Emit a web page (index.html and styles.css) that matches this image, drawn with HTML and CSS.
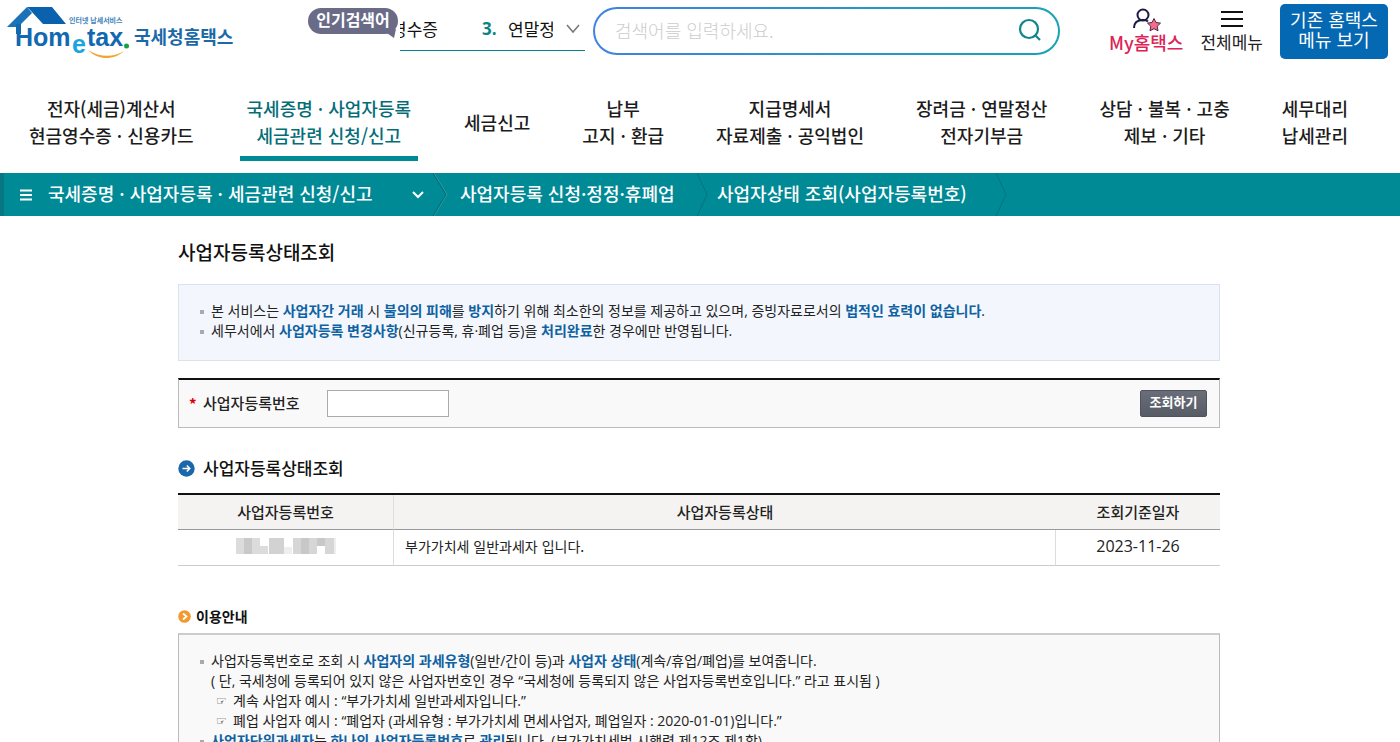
FILE: index.html
```html
<!DOCTYPE html>
<html lang="ko">
<head>
<meta charset="utf-8">
<title>국세청 홈택스 - 사업자등록상태조회</title>
<link rel="stylesheet" href="styles.css">
</head>
<body>
<div class="page">
  <header class="header">
    <a class="logo" href="#" aria-label="국세청홈택스">
      <svg width="236" height="60" viewBox="0 0 236 60">
        <path d="M7 27 27 7l5 6L18 27v4h-1v-4z" fill="#1a72b8"/>
        <path d="M16 24h5v10h-5z" fill="#1268b1"/>
        <path d="M27 7h25l14 17H43L31 11z" fill="#0a62ae"/>
        <text class="logo-small" x="69" y="23">인터넷 납세서비스</text>
        <text class="logo-main" x="15" y="46">Hom</text>
        <text class="logo-e" x="72" y="53">e</text>
        <text class="logo-main" x="87" y="46">tax</text>
        <circle cx="126.500" cy="46" r="2.500" fill="#18a04a"/>
        <path d="M88 50c9 10 26 11 36 1-9 6-24 7-36-1z" fill="#f2a530"/>
        <text class="logo-ko" x="134" y="44">국세청홈택스</text>
      </svg>
    </a>
    <div class="hot">
      <span class="hot-tag">인기검색어
        <svg class="hot-tail" width="14" height="10" viewBox="0 0 14 10"><path d="M0 2 12 0 10 9z" fill="#6a6b87"/></svg>
      </span>
      <div class="ticker">
        <a class="word word-out" href="#">현금영수증</a>
        <b class="rank">3.</b>
        <a class="word word-in" href="#">연말정산</a>
        <button class="ticker-open" type="button" aria-label="인기검색어 펼치기">
          <svg width="14" height="10" viewBox="0 0 14 10" fill="none" stroke="#777" stroke-width="1.500"><path d="m1 1 6 7 6-7"/></svg>
        </button>
      </div>
    </div>
    <form class="search">
      <input type="text" aria-label="검색어" placeholder="검색어를 입력하세요.">
      <button type="button" aria-label="검색">
        <svg width="24" height="24" viewBox="0 0 24 24" fill="none" stroke="#11858d" stroke-width="2.200"><circle cx="11" cy="11" r="9"/><path d="m17.500 17.500 4.500 4.500"/></svg>
      </button>
    </form>
    <a class="tool tool-my" href="#">
      <svg width="30" height="24" viewBox="0 0 30 24"><g fill="none" stroke="#1d1b45" stroke-width="2"><circle cx="12" cy="7" r="5.500"/><path d="M3 20c0-5 3-8 9-8 2 0 4 .5 5 1.500"/></g><path d="m23 10.500 2 4 4.500.6-3.300 3.200.8 4.500-4-2.100-4 2.100.8-4.500-3.300-3.200 4.500-.6z" fill="#f8698a" stroke="#4b2c45" stroke-width="1"/></svg>
      <span>My홈택스</span>
    </a>
    <a class="tool" href="#">
      <svg width="30" height="24" viewBox="0 0 30 24" stroke="#111" stroke-width="2"><path d="M4 4h22M4 11h22M4 18h22"/></svg>
      <span>전체메뉴</span>
    </a>
    <a class="old-site" href="#">기존 홈택스<br>메뉴 보기</a>
  </header>

  <nav class="menu">
    <a href="#">전자(세금)계산서<br>현금영수증 · 신용카드</a>
    <a class="active" href="#">국세증명 · 사업자등록<br>세금관련 신청/신고</a>
    <a href="#">세금신고</a>
    <a href="#">납부<br>고지 · 환급</a>
    <a href="#">지급명세서<br>자료제출 · 공익법인</a>
    <a href="#">장려금 · 연말정산<br>전자기부금</a>
    <a href="#">상담 · 불복 · 고충<br>제보 · 기타</a>
    <a href="#">세무대리<br>납세관리</a>
  </nav>

  <nav class="crumbs">
    <button class="crumb-main" type="button">
      <svg width="12" height="12" viewBox="0 0 12 12" stroke="#fff" stroke-width="2"><path d="M0 1.500h12M0 6h12M0 10.500h12"/></svg>
      <span>국세증명 · 사업자등록 · 세금관련 신청/신고</span>
      <svg class="crumb-down" width="12" height="8" viewBox="0 0 12 8" fill="none" stroke="#fff" stroke-width="2"><path d="m1 1 5 5 5-5"/></svg>
    </button>
    <svg class="sep" width="16" height="43" viewBox="0 0 16 43" fill="none"><path d="m1 0 13 21.500L1 43" stroke="#04636c"/><path d="m2 0 13 21.500L2 43" stroke="#4fb0b6" stroke-opacity=".5"/></svg>
    <a class="crumb-mid" href="#">사업자등록 신청·정정·휴폐업</a>
    <svg class="sep" width="12" height="43" viewBox="0 0 12 43" fill="none"><path d="m1 0 10 21.500L1 43" stroke="#04737c"/></svg>
    <a class="crumb-last" href="#">사업자상태 조회(사업자등록번호)</a>
    <svg class="sep" width="12" height="43" viewBox="0 0 12 43" fill="none"><path d="m1 0 10 21.500L1 43" stroke="#04737c"/></svg>
  </nav>

  <main class="content">
    <h1>사업자등록상태조회</h1>
    <ul class="box notice">
      <li><div>본 서비스는 <b>사업자간 거래</b> 시 <b>불의의 피해</b>를 <b>방지</b>하기 위해 최소한의 정보를 제공하고 있으며, 증빙자료로서의 <b>법적인 효력이 없습니다</b>.</div></li>
      <li><div>세무서에서 <b>사업자등록 변경사항</b>(신규등록, 휴·폐업 등)을 <b>처리완료</b>한 경우에만 반영됩니다.</div></li>
    </ul>

    <form class="lookup">
      <span class="required">*</span>
      <label for="bizno">사업자등록번호</label>
      <input id="bizno" type="text">
      <button type="button">조회하기</button>
    </form>

    <h2>
      <svg width="17" height="17" viewBox="0 0 17 17"><circle cx="8.500" cy="8.500" r="8.200" fill="#1a68ab"/><path d="M4.500 8.500h7M8.800 5.500l3 3-3 3" fill="none" stroke="#fff" stroke-width="1.500"/></svg>
      사업자등록상태조회
    </h2>
    <table class="result">
      <colgroup><col class="col-no"><col><col class="col-date"></colgroup>
      <thead><tr><th>사업자등록번호</th><th>사업자등록상태</th><th>조회기준일자</th></tr></thead>
      <tbody><tr>
        <td class="no">
          <svg width="100" height="17" viewBox="0 0 100 17"><path d="M0 0h24v8h8v8H0z" fill="#dcdcdc"/><path d="M8 0h8v16H8z" fill="#c9c9c9"/><path d="M33 0h15v16H33z" fill="#d2d2d2"/><path d="M48 9h8v7h-8z" fill="#eee"/><path d="M57 0h41v16h-9V8h-8v8H57z" fill="#d6d6d6"/><path d="M65 0h8v16h-8zM81 0h8v8h-8z" fill="#c8c8c8"/><path d="M98 0h2v16h-2z" fill="#eee"/></svg>
        </td>
        <td class="state">부가가치세 일반과세자 입니다.</td>
        <td class="date">2023-11-26</td>
      </tr></tbody>
    </table>

    <h3>
      <svg width="13" height="13" viewBox="0 0 13 13"><circle cx="6.500" cy="6.500" r="6.300" fill="#f29a2e"/><path d="m5 3.500 3.500 3L5 9.500" fill="none" stroke="#fff" stroke-width="1.800"/></svg>
      이용안내
    </h3>
    <ul class="box guide">
      <li><div>사업자등록번호로 조회 시 <b>사업자의 과세유형</b>(일반/간이 등)과 <b>사업자 상태</b>(계속/휴업/폐업)를 보여줍니다.
        <p>( 단, 국세청에 등록되어 있지 않은 사업자번호인 경우 “국세청에 등록되지 않은 사업자등록번호입니다.” 라고 표시됨 )</p>
        <p class="example"><i>☞</i>계속 사업자 예시 : “부가가치세 일반과세자입니다.”</p>
        <p class="example"><i>☞</i>폐업 사업자 예시 : “폐업자 (과세유형 : 부가가치세 면세사업자, 폐업일자 : 2020-01-01)입니다.”</p>
      </div></li>
      <li><div><b>사업자단위과세자</b>는 <b>하나의 사업자등록번호</b>로 <b>관리</b>됩니다. (부가가치세법 시행령 제12조 제1항)</div></li>
    </ul>
  </main>
</div>
</body>
</html>
```
FILE: styles.css
```css
* { box-sizing: border-box; }
body {
  margin: 0;
  background: #fff;
  color: #222;
  font-family: "Noto Sans CJK KR", sans-serif;
  font-size: 15px;
  line-height: 20px;
}
a { color: inherit; text-decoration: none; }
button { padding: 0; border: 0; background: none; color: inherit; font: inherit; }
svg { display: block; flex: none; }
ul, p, h1, h2, h3 { margin: 0; padding: 0; list-style: none; }
.page { height: 100vh; overflow: hidden; }

.header { display: flex; align-items: flex-start; height: 83px; padding-right: 12px; }
.logo { margin-right: 72px; }
.logo-small { fill: #3f83b8; font-size: 7px; font-weight: 700; }
.logo-main { fill: #1268b1; font: 700 25px "Liberation Sans", sans-serif; }
.logo-e { fill: #1ba5e0; font: 700 25px "Liberation Sans", sans-serif; }
.logo-ko { fill: #1c69a8; font-size: 18px; font-weight: 700; }

.hot { display: flex; margin-right: 8px; }
.hot-tag {
  position: relative;
  width: 90px;
  height: 26px;
  margin: 8px 2px 0 0;
  border-radius: 13px;
  background: #6a6b87;
  color: #fff;
  font-size: 16px;
  font-weight: 700;
  line-height: 22px;
  text-align: center;
}
.hot-tail { position: absolute; right: 0; bottom: -5px; }
.ticker {
  display: flex;
  align-items: center;
  width: 185px;
  height: 51px;
  padding-top: 8px;
  border-bottom: 1px solid #0d7f8c;
  color: #111;
  font-size: 17px;
}
.word { display: flex; overflow: hidden; white-space: nowrap; }
.word-out { justify-content: flex-end; width: 38px; margin-right: 44px; }
.word-in { width: 45px; margin-right: 13px; }
.rank { width: 26px; color: #0a8484; font-family: "Open Sans", sans-serif; }

.search {
  display: flex;
  flex: 1;
  align-items: center;
  height: 48px;
  margin: 7px 49px 0 0;
  padding: 0 16px 2px 20px;
  border: 2px solid transparent;
  border-radius: 24px;
  background: linear-gradient(#fff, #fff) padding-box, linear-gradient(90deg, #3f83dd, #16a3b4) border-box;
}
.search input { flex: 1; min-width: 0; padding: 0; border: 0; outline: 0; background: none; font: inherit; font-size: 18px; }
.search input::placeholder { color: #ccc; font-weight: 300; }

.tool {
  display: flex;
  flex-direction: column;
  align-items: center;
  margin: 8px 17px 0 0;
  color: #222;
  font-size: 17px;
}
.tool span { line-height: 20px; }
.tool-my { color: #dc2456; font-size: 18px; font-weight: 500; }
.old-site {
  width: 108px;
  height: 55px;
  margin-top: 4px;
  padding-top: 5px;
  border-radius: 5px;
  background: #0568b3;
  color: #fff;
  font-size: 18px;
  text-align: center;
}

.menu { display: flex; justify-content: space-between; padding: 0 50px 12px 27px; }
.menu a {
  display: grid;
  align-content: center;
  padding: 12px 2px 7px;
  border-bottom: 5px solid transparent;
  color: #1c1c1c;
  font-size: 18px;
  font-weight: 500;
  line-height: 27px;
  text-align: center;
  white-space: nowrap;
}
.menu .active { margin: 0 -4px; padding-right: 7px; padding-left: 7px; border-color: #008a96; color: #056d78; }

.crumbs {
  display: flex;
  align-items: center;
  height: 43px;
  border-left: 4px solid #067783;
  background: #008a96;
  color: #fff;
  font-size: 18px;
  font-weight: 500;
}
.crumb-main { display: flex; align-items: center; width: 428px; height: 43px; padding: 0 8px 0 16px; }
.crumb-main span { margin: 0 auto 0 16px; padding-bottom: 4px; }
.crumb-mid { width: 248px; padding: 0 0 4px 12px; }
.crumb-last { width: 287px; padding: 0 0 4px 9px; }

.content { padding: 22px 180px 0 178px; }
h1 { color: #111; font-size: 19px; font-weight: 500; line-height: 28px; }
.box { padding: 16px 20px 19px; font-family: "Open Sans", "Noto Sans CJK KR", sans-serif; font-size: 14px; }
.box li { display: flex; gap: 7px; }
.box li::before { content: ""; flex: none; width: 4px; height: 4px; margin: 9px 0 0 1px; background: #aaa; }
.box b { color: #0f62a2; font-weight: 700; }
.notice { margin-top: 18px; border: 1px solid #d9e3ec; background: #f3f7fd; }

.lookup {
  display: flex;
  align-items: center;
  height: 50px;
  margin-top: 17px;
  padding: 0 12px 0 10px;
  border: 1px solid #bbb;
  border-top: 2px solid #111;
  background: #f9f9f9;
}
.required { width: 14px; color: #d00; font-weight: 700; }
.lookup label { width: 124px; padding-bottom: 2px; font-weight: 500; }
.lookup input { width: 122px; height: 27px; border: 1px solid #aaa; background: #fff; }
.lookup button {
  width: 67px;
  height: 27px;
  margin-left: auto;
  padding-bottom: 3px;
  border: 1px solid #4f535d;
  border-radius: 2px;
  background: linear-gradient(#6a6e79, #565b66);
  color: #fff;
  font-size: 13px;
  font-weight: 700;
}

h2 { display: flex; align-items: center; gap: 8px; margin-top: 28px; color: #111; font-size: 17px; font-weight: 500; line-height: 24px; }
.result { width: 100%; margin-top: 13px; border-collapse: separate; border-spacing: 0; border-top: 2px solid #111; table-layout: fixed; }
.col-no { width: 216px; }
.col-date { width: 164px; }
.result th { height: 35px; padding: 0; border-bottom: 1px solid #999; background: #f4f3f1; font-weight: 500; }
.result td { height: 36px; padding: 0 0 3px; border-bottom: 1px solid #ccc; text-align: center; }
.result th:first-child, .result td:not(:last-child) { border-right: 1px solid #ddd; }
.result .state { padding-left: 11px; text-align: left; font-size: 14px; }
.result .date { font-family: "Open Sans", sans-serif; font-size: 16px; }
.no svg { margin: 0 auto; }

h3 { display: flex; align-items: center; gap: 5px; margin-top: 40px; color: #111; font-size: 14px; font-weight: 700; }
.guide { margin-top: 7px; border: 1px solid #bbb; border-top: 2px solid #ccc; background: #f9f9f9; }
.example { display: flex; padding-left: 5px; }
.example i { width: 17px; font: normal 12px/20px "DejaVu Sans", sans-serif; }
```
